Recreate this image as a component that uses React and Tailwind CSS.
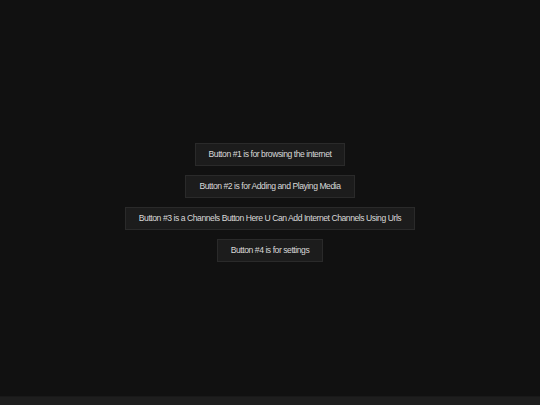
export default function App() {
  const items = [
    'Button #1 is for browsing the internet',
    'Button #2 is for Adding and Playing Media',
    'Button #3 is a Channels Button Here U Can Add Internet Channels Using Urls',
    'Button #4 is for settings',
  ];

  return (
    <div className="h-screen flex flex-col bg-[#111111]" style={{ fontFamily: '"Liberation Sans", Arial, sans-serif' }}>
      <div className="flex-1 flex flex-col items-center justify-center gap-[9px] pt-[8px]">
        {items.map((text) => (
          <div
            key={text}
            className="h-[23px] px-[13px] flex items-center bg-[#1c1c1c] border border-[#2a2a2a] text-[8.6px] tracking-[-0.45px] text-[#d8d8d8]"
          >
            {text}
          </div>
        ))}
      </div>
      <div className="h-[9px] bg-[#1e1e1e] border-t border-[#191919]" />
    </div>
  );
}
